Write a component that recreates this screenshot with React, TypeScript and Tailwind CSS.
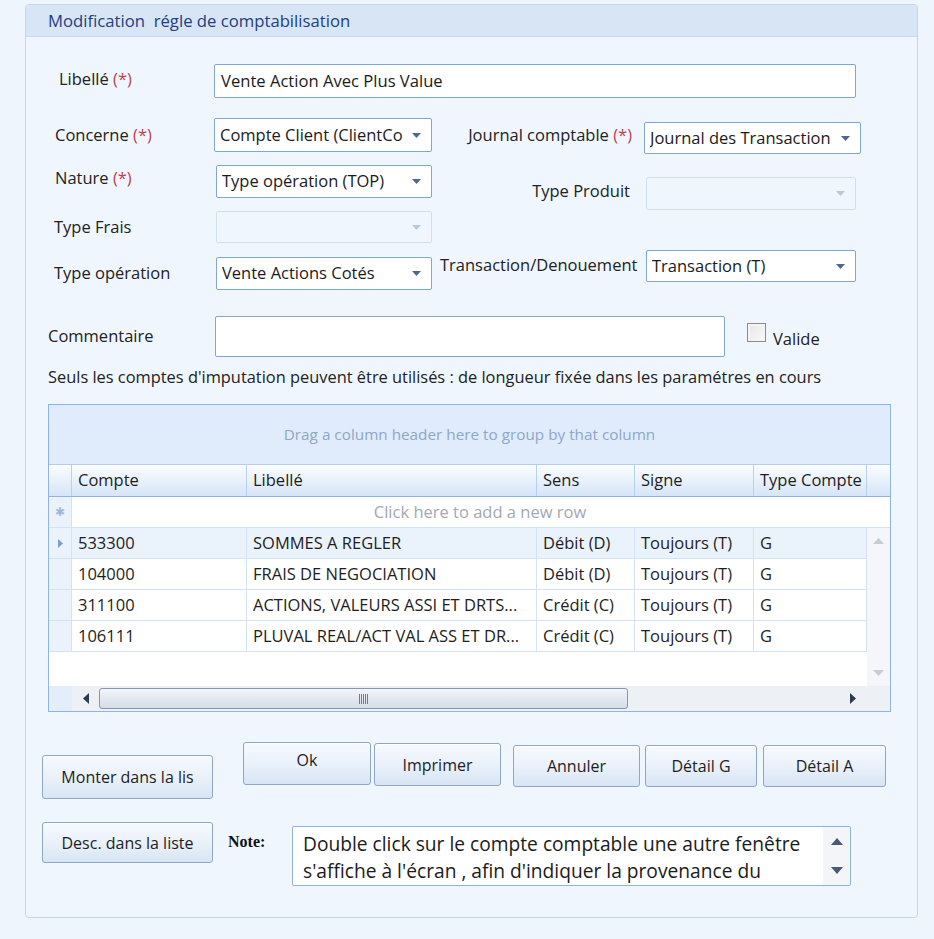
import type { ReactNode } from 'react'

const font = "font-['Open_Sans',sans-serif]"

function Req() {
  return <span className="text-[#c0404a]"> (*)</span>
}

function Arrow({ disabled }: { disabled?: boolean }) {
  return (
    <svg width="9" height="5" viewBox="0 0 9 5" className="shrink-0">
      <path d="M0 0h9L4.5 5z" fill={disabled ? '#b9c9dd' : '#4d6891'} />
    </svg>
  )
}

function Select({ value, w, h, disabled }: { value?: string; w: string; h: string; disabled?: boolean }) {
  return (
    <div
      className={`flex items-center justify-between rounded-[2px] border pl-[5px] pr-[10px] text-[16.5px] ${w} ${h} ${
        disabled ? 'border-[#d0dff0] bg-[#eff6fe]' : 'border-[#7fa6d9] bg-white text-[#1b1b1b]'
      }`}
    >
      <span className="overflow-hidden whitespace-nowrap">{value}</span>
      <Arrow disabled={disabled} />
    </div>
  )
}

function Btn({ children, className }: { children: ReactNode; className: string }) {
  return (
    <button
      className={`rounded-[3px] border border-[#8ea6c8] bg-gradient-to-b from-[#f7faff] via-[#eaf1fa] to-[#d8e5f5] text-[16px] text-[#1e1e1e] shadow-[inset_0_1px_0_#ffffff] ${className}`}
    >
      {children}
    </button>
  )
}

const cols = [
  { key: 'compte', label: 'Compte', w: 'w-[175px]' },
  { key: 'libelle', label: 'Libellé', w: 'w-[290px]' },
  { key: 'sens', label: 'Sens', w: 'w-[98px]' },
  { key: 'signe', label: 'Signe', w: 'w-[119px]' },
  { key: 'type', label: 'Type Compte', w: 'w-[113px]' },
]

const rows = [
  { compte: '533300', libelle: 'SOMMES A REGLER', sens: 'Débit (D)', signe: 'Toujours (T)', type: 'G' },
  { compte: '104000', libelle: 'FRAIS DE NEGOCIATION', sens: 'Débit (D)', signe: 'Toujours (T)', type: 'G' },
  { compte: '311100', libelle: 'ACTIONS, VALEURS ASSI ET DRTS...', sens: 'Crédit (C)', signe: 'Toujours (T)', type: 'G' },
  { compte: '106111', libelle: 'PLUVAL REAL/ACT VAL ASS ET DR...', sens: 'Crédit (C)', signe: 'Toujours (T)', type: 'G' },
]

function Grid() {
  return (
    <div className="ml-[22px] flex h-[308px] w-[843px] flex-col border border-[#8fb4e3] bg-white">
      <div className="flex h-[59px] items-center justify-center bg-[#e0ebfb] text-[15.3px] text-[#8fa7c9]">
        Drag a column header here to group by that column
      </div>
      {/* header */}
      <div className="flex h-[33px] border-y border-t-[#b6cdec] border-b-[#8fb4e3] bg-gradient-to-b from-[#fbfdff] to-[#d6e5f8] text-[16.5px] text-[#1e1e1e]">
        <div className="w-[23px] border-r border-[#b9d0ee]" />
        {cols.map((c) => (
          <div key={c.key} className={`${c.w} flex items-center whitespace-nowrap border-r border-[#b9d0ee] pl-[6px]`}>
            {c.label}
          </div>
        ))}
        <div className="flex-1" />
      </div>
      {/* new row */}
      <div className="flex h-[31px] border-b border-[#d3e2f4]">
        <div className="flex w-[23px] items-center justify-center border-r border-[#d3e2f4] bg-[#eaf2fc] text-[12px] text-[#9fb8da]">
          ✱
        </div>
        <div className="flex flex-1 items-center justify-center pr-[2px] text-[16.5px] text-[#a3a9b2]">
          Click here to add a new row
        </div>
      </div>
      <div className="flex flex-1">
        <div className="flex w-[818px] flex-col">
          {rows.map((r, i) => (
            <div
              key={r.compte}
              className={`flex h-[31px] border-b border-[#d3e2f4] text-[16.5px] text-[#1e1e1e] ${i === 0 ? 'bg-[#eaf2fc]' : 'bg-white'}`}
            >
              <div className="flex w-[23px] items-center justify-center border-r border-[#d3e2f4] bg-[#eaf2fc]">
                {i === 0 && (
                  <svg width="5" height="9" viewBox="0 0 5 9">
                    <path d="M0 0l5 4.5L0 9z" fill="#7f9cc4" />
                  </svg>
                )}
              </div>
              {cols.map((c) => (
                <div
                  key={c.key}
                  className={`${c.w} flex items-center overflow-hidden whitespace-nowrap border-r border-[#d3e2f4] pl-[6px]`}
                >
                  {r[c.key as keyof typeof r]}
                </div>
              ))}
            </div>
          ))}
          <div className="flex-1" />
        </div>
        <div className="flex w-[24px] flex-col items-center justify-between bg-[#f4f6f9] py-[10px]">
          <svg width="11" height="6" viewBox="0 0 11 6">
            <path d="M0 6L5.5 0 11 6z" fill="#c5ccd6" />
          </svg>
          <svg width="11" height="6" viewBox="0 0 11 6">
            <path d="M0 0h11L5.5 6z" fill="#c5ccd6" />
          </svg>
        </div>
      </div>
      {/* horizontal scrollbar */}
      <div className="flex h-[25px] bg-[#edf1f6]">
        <div className="w-[23px] bg-[#e4eefb]" />
        <div className="flex w-[27px] items-center justify-center">
          <svg width="6" height="11" viewBox="0 0 6 11">
            <path d="M6 0v11L0 5.5z" fill="#2b3a55" />
          </svg>
        </div>
        <div className="my-[2px] flex w-[529px] items-center justify-center rounded-[3px] border border-[#8797b0] bg-gradient-to-b from-[#f2f5f9] to-[#d5dde8]">
          <div className="flex gap-[1px]">
            {[0, 1, 2, 3, 4].map((k) => (
              <div key={k} className="h-[10px] w-[1px] bg-[#6d7d95]" />
            ))}
          </div>
        </div>
        <div className="flex-1" />
        <div className="flex w-[24px] items-center justify-center">
          <svg width="6" height="11" viewBox="0 0 6 11">
            <path d="M0 0v11l6-5.5z" fill="#2b3a55" />
          </svg>
        </div>
        <div className="w-[25px]" />
      </div>
    </div>
  )
}

export default function App() {
  return (
    <div className={`min-h-[939px] w-[934px] bg-[#eef5fd] pt-[4px] ${font} text-[#222]`}>
      <div className="ml-[25px] flex h-[914px] w-[893px] flex-col overflow-hidden rounded-[4px] border border-[#c6d6ea] bg-[#eff6fe]">
        <div className="flex h-[32px] shrink-0 items-center border-b border-[#c9daee] bg-[#d7e5f5] pl-[22px] text-[16.7px] text-[#23407f]">
          Modification&nbsp; régle de comptabilisation
        </div>

        {/* Libellé */}
        <div className="mt-[27px] flex items-center">
          <div className="ml-[33px] w-[155px] pb-[4px] text-[16.5px]">
            Libellé<Req />
          </div>
          <div className="flex h-[34px] w-[642px] items-center rounded-[2px] border border-[#7fa6d9] bg-white pl-[6px] text-[16.6px] text-[#1b1b1b]">
            Vente Action Avec Plus Value
          </div>
        </div>

        {/* two columns */}
        <div className="mt-[20px] flex">
          <div className="flex flex-col">
            <div className="flex items-center">
              <div className="ml-[29px] w-[159px] text-[16.5px]">
                Concerne<Req />
              </div>
              <Select value="Compte Client (ClientCo" w="w-[218px]" h="h-[34px]" />
            </div>
            <div className="mt-[13px] flex h-[33px] items-center">
              <div className="ml-[29px] w-[161px] pb-[8px] text-[16.5px] leading-[24px]">
                Nature <Req />
              </div>
              <Select value="Type opération (TOP)" w="w-[216px]" h="h-[33px]" />
            </div>
            <div className="mt-[13px] flex items-center">
              <div className="ml-[28px] w-[162px] text-[16.5px]">Type Frais</div>
              <Select disabled w="w-[216px]" h="h-[32px]" />
            </div>
            <div className="mt-[14px] flex items-center">
              <div className="ml-[28px] w-[162px] text-[16.5px]">Type opération</div>
              <Select value="Vente Actions Cotés" w="w-[216px]" h="h-[33px]" />
            </div>
          </div>

          <div className="ml-[8px] mt-[4px] flex flex-col">
            <div className="flex h-[32px] items-center">
              <div className="w-[204px] whitespace-nowrap pb-[6px] pr-[12px] text-right text-[16.5px] leading-[24px]">
                Journal comptable<Req />
              </div>
              <Select value="Journal des Transaction" w="w-[217px]" h="h-[32px]" />
            </div>
            <div className="mt-[23px] flex h-[33px] items-center">
              <div className="w-[206px] pb-[6px] pr-[16px] text-right text-[16.5px] leading-[24px]">Type Produit</div>
              <Select disabled w="w-[210px]" h="h-[33px]" />
            </div>
            <div className="mt-[40px] flex h-[32px] items-center">
              <div className="w-[206px] whitespace-nowrap pb-[2px] text-[16.5px] leading-[24px]">Transaction/Denouement</div>
              <Select value="Transaction (T)" w="w-[210px]" h="h-[32px]" />
            </div>
          </div>
        </div>

        {/* Commentaire */}
        <div className="mt-[26px] flex h-[41px] items-center">
          <div className="ml-[22px] w-[167px] text-[16.5px]">Commentaire</div>
          <div className="h-[41px] w-[510px] rounded-[2px] border border-[#7fa6d9] bg-white" />
          <div className="ml-[22px] mb-[8px] h-[19px] w-[19px] border border-[#8c8c8c] bg-gradient-to-br from-[#e6e6e6] to-[#fafafa] shadow-[inset_0_0_0_2px_#f4f4f4]" />
          <div className="ml-[7px] mt-[6px] text-[16.5px]">Valide</div>
        </div>

        <div className="ml-[22px] mt-[8px] whitespace-nowrap text-[16.4px] leading-[24px]">
          Seuls les comptes d'imputation peuvent être utilisés : de longueur fixée dans les paramétres en cours
        </div>

        <div className="mt-[15px]">
          <Grid />
        </div>

        {/* buttons */}
        <div className="mt-[30px] flex items-start">
          <Btn className="ml-[16px] mt-[13px] h-[44px] w-[171px]">Monter dans la lis</Btn>
          <Btn className="ml-[30px] h-[43px] w-[128px] pb-[8px]">Ok</Btn>
          <Btn className="ml-[3px] mt-[1px] h-[43px] w-[127px]">Imprimer</Btn>
          <Btn className="ml-[12px] mt-[3px] h-[42px] w-[127px]">Annuler</Btn>
          <Btn className="ml-[5px] mt-[3px] h-[42px] w-[112px]">Détail G</Btn>
          <Btn className="ml-[6px] mt-[3px] h-[42px] w-[123px]">Détail A</Btn>
        </div>

        <div className="mt-[23px] flex items-start">
          <Btn className="ml-[16px] h-[41px] w-[171px]">Desc. dans la liste</Btn>
          <div className="ml-[15px] mt-[8px] w-[37px] font-['Liberation_Serif',serif] text-[16px] font-bold text-[#111]">Note:</div>
          <div className="ml-[27px] mt-[4px] flex h-[60px] w-[559px] overflow-hidden rounded-[2px] border border-[#8fb4e3] bg-white">
            <div className="flex-1 pl-[10px] pt-[3px] text-[19.2px] leading-[27px] text-[#1b1b1b]">
              Double click sur le compte comptable une autre fenêtre s'affiche à l'écran , afin d'indiquer la provenance du
            </div>
            <div className="flex w-[27px] shrink-0 flex-col items-center justify-between bg-[#f3f5f8] py-[11px]">
              <svg width="12" height="7" viewBox="0 0 12 7">
                <path d="M0 7L6 0l6 7z" fill="#4b5b76" />
              </svg>
              <svg width="12" height="7" viewBox="0 0 12 7">
                <path d="M0 0h12L6 7z" fill="#4b5b76" />
              </svg>
            </div>
          </div>
        </div>
      </div>
    </div>
  )
}
